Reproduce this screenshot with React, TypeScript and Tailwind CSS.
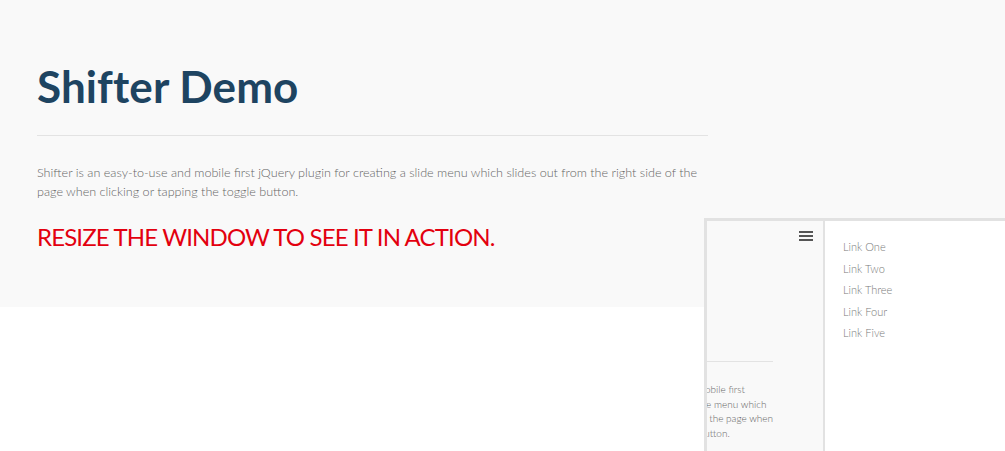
import React from "react";

const links = ["Link One", "Link Two", "Link Three", "Link Four", "Link Five"];

export default function App() {
  return (
    <div
      className="relative w-[1005px] h-[451px] overflow-hidden bg-white"
      style={{ fontFamily: "Lato, 'Open Sans', sans-serif" }}
    >
      <section className="h-[307px] bg-[#f9f9f9] pl-[37px] pt-[58px]">
        <div className="w-[671px]">
          <h1 className="text-[44px] leading-[56px] font-bold text-[#1e4461] tracking-[0.1px]">Shifter Demo</h1>
          <hr className="mt-[21px] border-0 border-t border-[#e3e3e3]" />
          <p className="mt-[27px] text-[12.6px] leading-[19px] font-light text-[#666]">
            Shifter is an easy-to-use and mobile first jQuery plugin for creating a slide menu which slides out from the right side of the page when clicking or tapping the toggle button.
          </p>
          <h2 className="mt-[20px] text-[24px] leading-[32px] tracking-[-0.85px] text-[#e3000f]">
            RESIZE THE WINDOW TO SEE IT IN ACTION.
          </h2>
        </div>
      </section>

      <div className="absolute left-[704px] top-[218px] right-0 bottom-0 flex border-l-[3px] border-t-[3px] border-[#e2e2e2]">
        <div className="w-[116px] shrink-0 bg-[#f9f9f9] overflow-hidden flex flex-col">
          <div className="flex justify-end pr-[10px] pt-[10px]">
            <div className="flex flex-col gap-[2px] w-[14px]">
              <span className="block h-[2px] bg-[#555]" />
              <span className="block h-[2px] bg-[#555]" />
              <span className="block h-[2px] bg-[#555]" />
            </div>
          </div>
          <div className="flex justify-end pr-[50px] mt-[120px]">
            <div className="w-[201px] shrink-0">
              <hr className="border-0 border-t border-[#e3e3e3]" />
              <p className="mt-[20px] text-[10px] leading-[14.5px] font-light text-[#666] whitespace-nowrap">
                Shifter is an easy-to-use and mobile first
                <br />
                jQuery plugin for creating a slide menu which
                <br />
                slides out from the right side of the page when
                <br />
                clicking or tapping the toggle button.
              </p>
            </div>
          </div>
        </div>
        <div className="w-[2px] bg-[#e2e2e2]" />
        <nav className="flex-1 bg-white pl-[18px] pt-[15px]">
          <ul className="flex flex-col">
            {links.map((l) => (
              <li key={l} className="text-[11px] leading-[21.6px] font-light text-[#7a7a7a]">
                {l}
              </li>
            ))}
          </ul>
        </nav>
      </div>
    </div>
  );
}
